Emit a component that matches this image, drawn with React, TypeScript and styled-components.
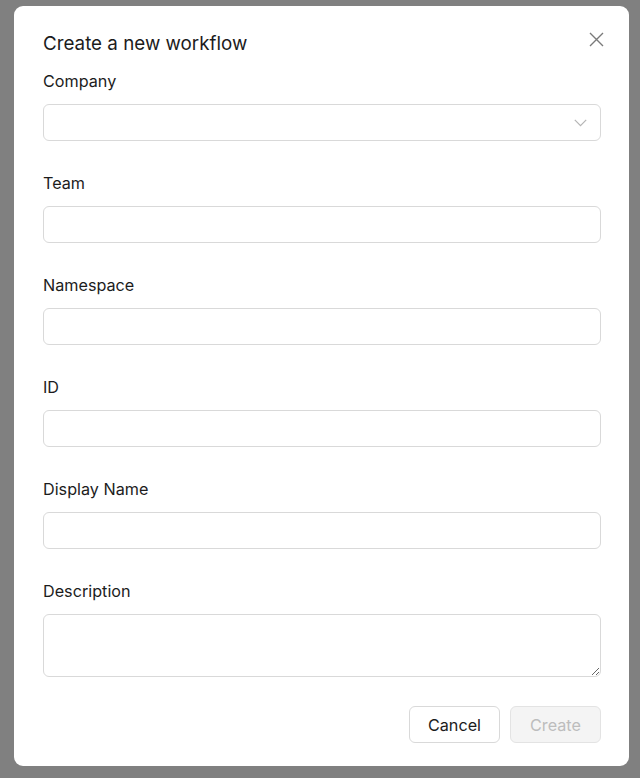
import React from 'react';
import styled, { createGlobalStyle } from 'styled-components';

const GlobalStyle = createGlobalStyle`
    html, body {
        margin: 0;
        padding: 0;
        background: #808080;
    }
    body {
        font-family: Inter, "Noto Sans", "Liberation Sans", sans-serif;
        color: #1c1c1c;
    }
    * {
        box-sizing: border-box;
    }
`;

const Backdrop = styled.div`
    width: 640px;
    height: 778px;
    padding: 6px 11px 12px 14px;
    background: #808080;
`;

const Modal = styled.div`
    position: relative;
    height: 760px;
    background: #ffffff;
    border-radius: 9px;
    padding: 26px 28px 24px 29px;
    display: flex;
    flex-direction: column;
`;

const Title = styled.h2`
    margin: 0 0 13px;
    font-size: 18.8px;
    line-height: 24px;
    font-weight: 400;
    color: #1c1c1c;
`;

const CloseButton = styled.button`
    position: absolute;
    top: 19px;
    right: 19px;
    width: 28px;
    height: 28px;
    padding: 0;
    border: none;
    background: transparent;
    display: flex;
    align-items: center;
    justify-content: center;
    cursor: pointer;
`;

const Field = styled.div`
    display: flex;
    flex-direction: column;
    gap: 11px;
    margin-bottom: 30px;
`;

const Label = styled.label`
    font-size: 16.2px;
    line-height: 24px;
    color: #1c1c1c;
`;

const InputBox = styled.input`
    height: 37px;
    width: 100%;
    border: 1px solid #d9d9d9;
    border-radius: 6px;
    padding: 0 12px;
    font: inherit;
    font-size: 15px;
    outline: none;
    background: #fff;
`;

const SelectBox = styled.div`
    position: relative;
    height: 37px;
    border: 1px solid #d9d9d9;
    border-radius: 6px;
    background: #fff;
    display: flex;
    align-items: center;
    justify-content: flex-end;
    padding-right: 13px;
`;

const TextBox = styled.textarea`
    height: 63px;
    width: 100%;
    border: 1px solid #d9d9d9;
    border-radius: 6px;
    padding: 8px 12px;
    font: inherit;
    font-size: 15px;
    outline: none;
    resize: vertical;
    display: block;
`;

const Footer = styled.div`
    display: flex;
    justify-content: flex-end;
    gap: 10px;
    margin-top: -1px;
`;

const Button = styled.button<{ $disabled?: boolean }>`
    width: 91px;
    height: 37px;
    border-radius: 6px;
    border: 1px solid ${p => (p.$disabled ? '#e3e3e3' : '#d9d9d9')};
    background: ${p => (p.$disabled ? '#f4f4f4' : '#ffffff')};
    color: ${p => (p.$disabled ? '#bdbdbd' : '#1c1c1c')};
    font-family: inherit;
    font-size: 16.2px;
    cursor: ${p => (p.$disabled ? 'not-allowed' : 'pointer')};
`;

const fields = ['Team', 'Namespace', 'ID', 'Display Name'];

const App: React.FC = () => {
    return (
        <>
            <GlobalStyle />
            <Backdrop>
                <Modal>
                    <Title>Create a new workflow</Title>
                    <CloseButton aria-label="Close">
                        <svg width="15" height="15" viewBox="0 0 15 15" fill="none" stroke="#7a7a7a" strokeWidth="1.4">
                            <path d="M1 1 L14 14 M14 1 L1 14" />
                        </svg>
                    </CloseButton>

                    <Field>
                        <Label>Company</Label>
                        <SelectBox>
                            <svg width="13" height="8" viewBox="0 0 13 8" fill="none" stroke="#b5b5b5" strokeWidth="1.2">
                                <path d="M0.8 0.8 L6.5 6.6 L12.2 0.8" />
                            </svg>
                        </SelectBox>
                    </Field>

                    {fields.map(name => (
                        <Field key={name}>
                            <Label>{name}</Label>
                            <InputBox />
                        </Field>
                    ))}

                    <Field>
                        <Label>Description</Label>
                        <TextBox />
                    </Field>

                    <Footer>
                        <Button>Cancel</Button>
                        <Button $disabled disabled>Create</Button>
                    </Footer>
                </Modal>
            </Backdrop>
        </>
    );
};

export default App;
